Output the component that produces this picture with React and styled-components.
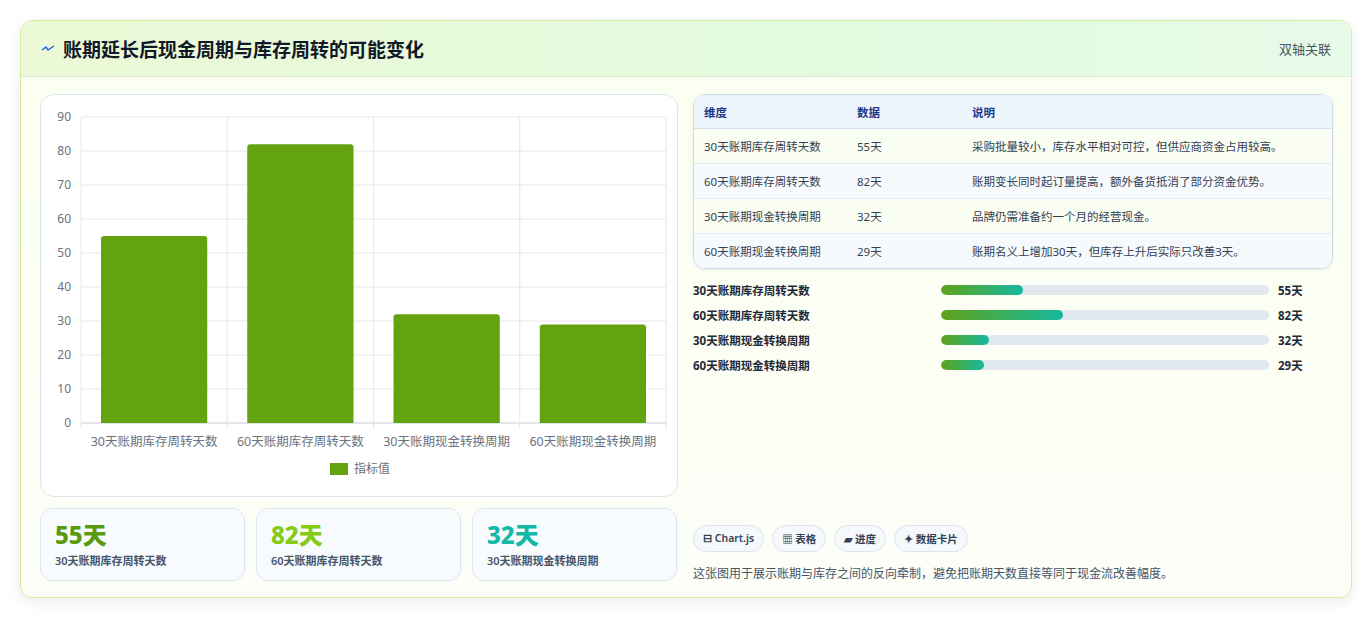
import React from 'react';
import styled, { createGlobalStyle } from 'styled-components';

const Global = createGlobalStyle`
  body { margin: 0; background: #fff; font-family: "Noto Sans", "Noto Sans CJK SC", sans-serif; }
`;

const Page = styled.div`
  padding: 20px;
`;

const Card = styled.div`
  border: 1px solid #d4ee9c;
  border-radius: 12px;
  background: linear-gradient(180deg, #fbfff0 0%, #fdfef8 100%);
  box-shadow: 0 4px 14px rgba(0,0,0,0.08);
  overflow: hidden;
  height: 578px;
  box-sizing: border-box;
`;

const Header = styled.div`
  height: 55px;
  display: flex;
  align-items: center;
  justify-content: space-between;
  padding: 0 20px;
  background: linear-gradient(90deg, #ecf9d6 0%, #e2fbdf 60%, #e6fbe8 100%);
  border-bottom: 1px solid #dfeed0;
`;

const Title = styled.h2`
  margin: 0;
  font-size: 19px;
  font-weight: 700;
  color: #111827;
  display: flex;
  align-items: center;
  gap: 8px;
`;

const Badge = styled.span`
  font-size: 13px;
  color: #4b5563;
`;

const Body = styled.div`
  display: grid;
  grid-template-columns: 638px 640px;
  gap: 15px;
  padding: 17px 19px 0 19px;
`;

const Left = styled.div`
  display: flex;
  flex-direction: column;
  gap: 11px;
`;

const ChartBox = styled.div`
  height: 403px;
  border: 1px solid #dbe7ee;
  border-radius: 14px;
  background: #fff;
  box-sizing: border-box;
`;

const Stats = styled.div`
  display: grid;
  grid-template-columns: repeat(3, 205px);
  gap: 11px;
`;

const Stat = styled.div`
  height: 73px;
  box-sizing: border-box;
  border: 1px solid #dbe7ee;
  border-radius: 12px;
  background: #f8fbfd;
  padding: 9px 14px;
`;

const StatValue = styled.div`
  font-size: 24px;
  font-weight: 800;
  line-height: 34px;
  color: ${p => p.color};
`;

const StatLabel = styled.div`
  font-size: 11px;
  font-weight: 600;
  color: #475569;
`;

const Right = styled.div`
  display: flex;
  flex-direction: column;
  height: 488px;
`;

const Table = styled.table`
  width: 100%;
  border-collapse: separate;
  border-spacing: 0;
  border: 1px solid #cfdbe8;
  border-radius: 12px;
  overflow: hidden;
  font-size: 11.5px;
  box-shadow: 0 1px 3px rgba(0,0,0,0.08);
`;

const Th = styled.th`
  text-align: left;
  font-weight: 600;
  color: #1e3a8a;
  background: #eef5fd;
  height: 33px;
  padding: 0 10px;
  border-bottom: 1px solid #d5e0ec;
  width: ${p => p.w || 'auto'};
`;

const Td = styled.td`
  height: 34px;
  padding: 0 10px;
  color: #334155;
  background: ${p => (p.odd ? '#fafdf1' : '#f7fafc')};
  border-top: ${p => (p.first ? 'none' : '1px solid #e2e8f0')};
`;

const Bars = styled.div`
  display: flex;
  flex-direction: column;
  gap: 9px;
  margin-top: 13px;
`;

const BarRow = styled.div`
  display: grid;
  grid-template-columns: 239px 328px 1fr;
  align-items: center;
  gap: 9px;
  font-size: 11.5px;
  font-weight: 700;
  color: #1f2937;
  height: 16px;
`;

const Track = styled.div`
  height: 10px;
  border-radius: 5px;
  background: #e2e8f0;
  overflow: hidden;
`;

const Fill = styled.div`
  height: 100%;
  border-radius: 5px;
  background: linear-gradient(90deg, #5fa31a, #16b89e);
`;

const Foot = styled.div`
  margin-top: auto;
`;

const Tags = styled.div`
  display: flex;
  gap: 8px;
`;

const Tag = styled.span`
  font-size: 10.5px;
  font-weight: 600;
  color: #334155;
  border: 1px solid #dbe4ee;
  background: #f6f9fb;
  border-radius: 14px;
  padding: 5px 9px;
`;

const Note = styled.div`
  margin-top: 12px;
  font-size: 12px;
  color: #475569;
`;

const data = [
  ['30天账期库存周转天数', 55, '采购批量较小，库存水平相对可控，但供应商资金占用较高。'],
  ['60天账期库存周转天数', 82, '账期变长同时起订量提高，额外备货抵消了部分资金优势。'],
  ['30天账期现金转换周期', 32, '品牌仍需准备约一个月的经营现金。'],
  ['60天账期现金转换周期', 29, '账期名义上增加30天，但库存上升后实际只改善3天。'],
];

function Chart() {
  const x0 = 40, y0 = 328, top = 22, w = 585, cw = w / 4, unit = (y0 - top) / 90;
  return (
    <svg width="638" height="403" style={{ display: 'block' }} fontFamily="Noto Sans, Noto Sans CJK SC, sans-serif">
      {[0, 10, 20, 30, 40, 50, 60, 70, 80, 90].map(v => {
        const y = y0 - v * unit;
        return (
          <g key={v}>
            <line x1={x0} x2={x0 + w} y1={y} y2={y} stroke={v === 0 ? '#c8ccd4' : '#e5e7eb'} />
            <text x={x0 - 10} y={y + 4} fontSize="12" fill="#6b7280" textAnchor="end">{v}</text>
          </g>
        );
      })}
      {[0, 1, 2, 3, 4].map(i => (
        <line key={i} x1={x0 + i * cw} x2={x0 + i * cw} y1={top} y2={y0 + 6} stroke="#e5e7eb" />
      ))}
      {data.map(([l, v], i) => (
        <g key={l}>
          <path
            d={`M${x0 + i * cw + 20} ${y0} V${y0 - v * unit + 3} q0 -3 3 -3 H${x0 + i * cw + cw - 23} q3 0 3 3 V${y0} Z`}
            fill="#62a30f"
          />
          <text x={x0 + i * cw + cw / 2} y={y0 + 23} fontSize="12.5" fill="#6b7280" textAnchor="middle">{l}</text>
        </g>
      ))}
      <rect x="289" y="368" width="18" height="12" fill="#62a30f" />
      <text x="313" y="378" fontSize="12" fill="#6b7280">指标值</text>
    </svg>
  );
}

export default function App() {
  return (
    <Page>
      <Global />
      <Card>
        <Header>
          <Title>
            <svg width="14" height="10" viewBox="0 0 14 10">
              <path d="M1 6 L5 3 L7 6 L13 2" stroke="#2563eb" strokeWidth="1.5" fill="none" />
            </svg>
            账期延长后现金周期与库存周转的可能变化
          </Title>
          <Badge>双轴关联</Badge>
        </Header>
        <Body>
          <Left>
            <ChartBox><Chart /></ChartBox>
            <Stats>
              <Stat><StatValue color="#5a9a0d">55天</StatValue><StatLabel>30天账期库存周转天数</StatLabel></Stat>
              <Stat><StatValue color="#84cc16">82天</StatValue><StatLabel>60天账期库存周转天数</StatLabel></Stat>
              <Stat><StatValue color="#14b8a6">32天</StatValue><StatLabel>30天账期现金转换周期</StatLabel></Stat>
            </Stats>
          </Left>
          <Right>
            <Table>
              <thead>
                <tr><Th w="133px">维度</Th><Th w="95px">数据</Th><Th>说明</Th></tr>
              </thead>
              <tbody>
                {data.map(([l, v, d], i) => (
                  <tr key={l}>
                    <Td odd={i % 2 === 0} first={i === 0}>{l}</Td>
                    <Td odd={i % 2 === 0} first={i === 0}>{v}天</Td>
                    <Td odd={i % 2 === 0} first={i === 0}>{d}</Td>
                  </tr>
                ))}
              </tbody>
            </Table>
            <Bars>
              {data.map(([l, v]) => (
                <BarRow key={l}>
                  <span>{l}</span>
                  <Track><Fill style={{ width: `${(v / 220) * 100}%` }} /></Track>
                  <span>{v}天</span>
                </BarRow>
              ))}
            </Bars>
            <Foot>
              <Tags>
                <Tag>⊟ Chart.js</Tag>
                <Tag>▦ 表格</Tag>
                <Tag>▰ 进度</Tag>
                <Tag>✦ 数据卡片</Tag>
              </Tags>
              <Note>这张图用于展示账期与库存之间的反向牵制，避免把账期天数直接等同于现金流改善幅度。</Note>
            </Foot>
          </Right>
        </Body>
      </Card>
    </Page>
  );
}
